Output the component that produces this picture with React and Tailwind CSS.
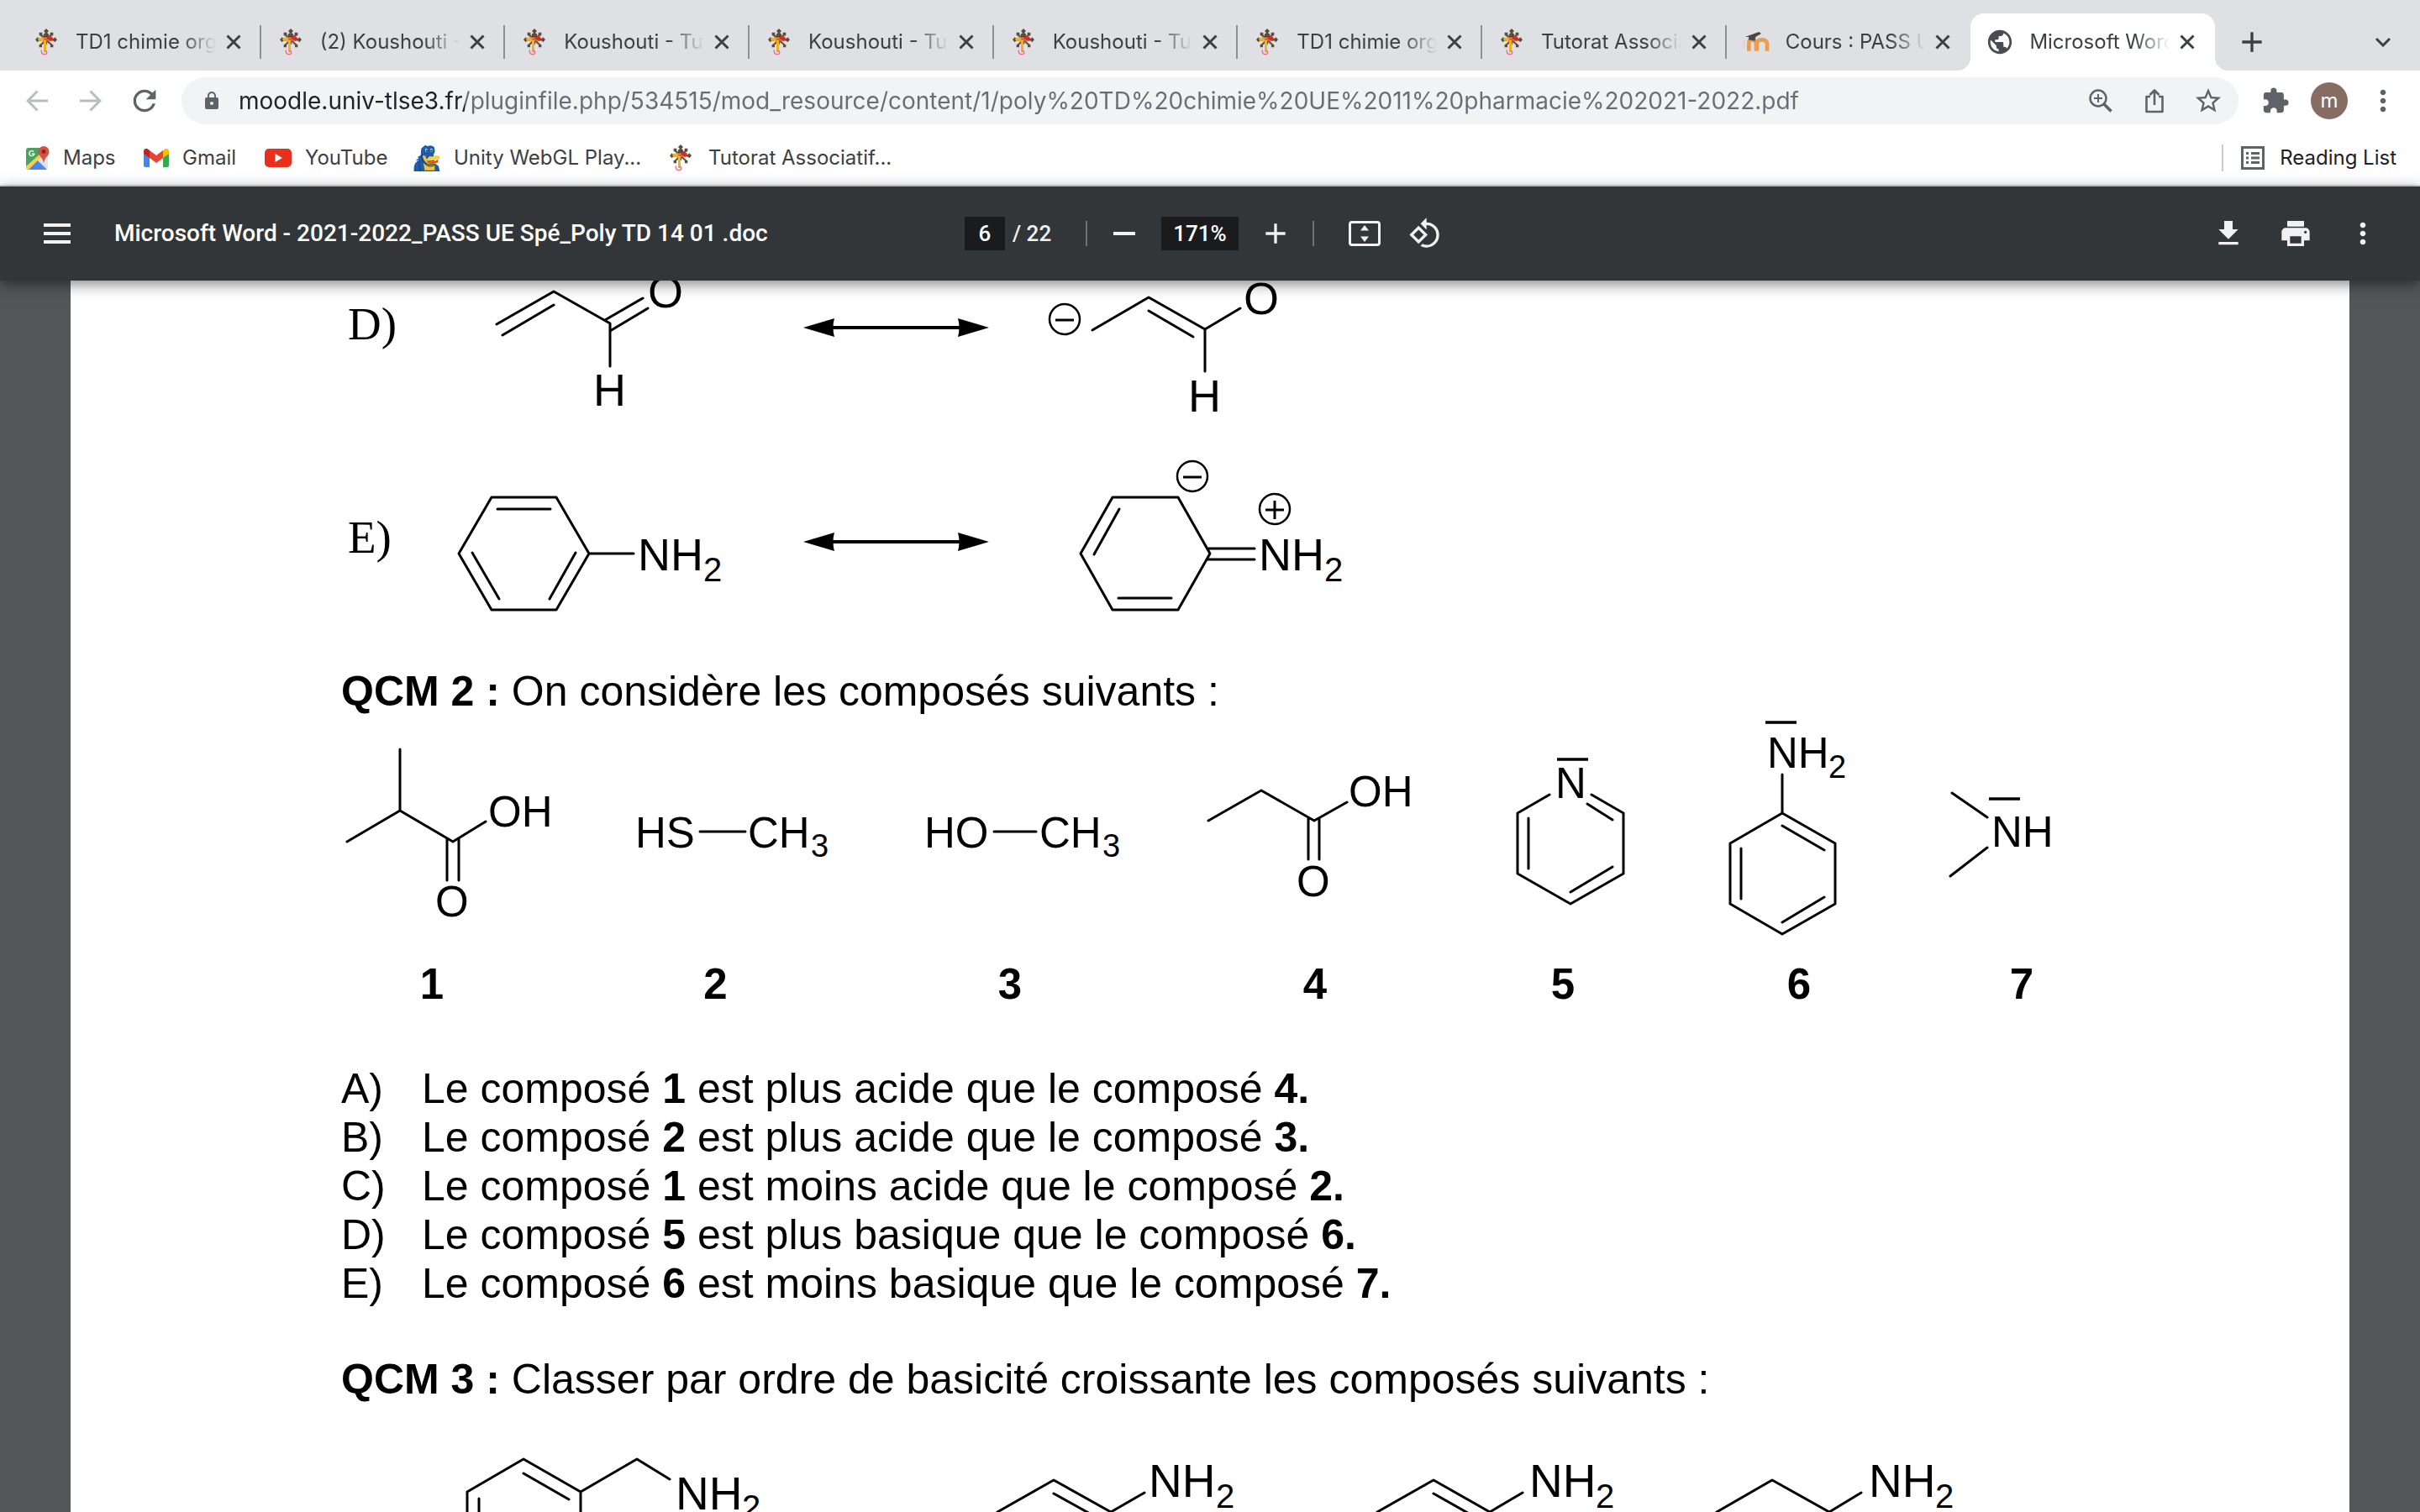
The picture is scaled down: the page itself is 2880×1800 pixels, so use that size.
import React from "react";
import {
  MdAdd,
  MdExtension,
  MdFileDownload,
  MdLock,
  MdMoreVert,
  MdPrint,
  MdPublic,
  MdRefresh,
  MdRotate90DegreesCcw,
  MdStarBorder,
} from "react-icons/md";

/* ---------- small icons ---------- */

function TutoratIcon() {
  return (
    <svg viewBox="0 0 78 96" className="h-8 w-[26px] shrink-0" aria-hidden="true">
      <g stroke="#6b5645" strokeWidth="7" fill="none">
        <path d="M39 6V56M6 40H72M17 20L60 60M61 20L18 60" />
      </g>
      <g fill="#5c4a3c">
        <path d="M39 0l9 9-9 9-9-9zM0 40l8-9 8 9-8 9zM78 40l-8-9-8 9 8 9zM14 14h11v11H14zM53 14h11v11H53zM14 57h10v10H14zM54 57h10v10H54z" />
        <circle cx="39" cy="26" r="10" />
      </g>
      <path d="M10 36q4-5 10-4h30v11H39v34q0 9-8 8l-1-8V44H16q-7 0-6-8z" fill="#f3b21c" />
      <path d="M44 30h16l4 7-9 8-8-5H32l-4-4h12z" fill="#e02a1d" />
      <path d="M22 76q-2 14 9 16q12 1 10-9q-3-6-9-2" fill="none" stroke="#e8707c" strokeWidth="4" />
    </svg>
  );
}

function MoodleIcon() {
  return (
    <svg viewBox="0 0 96 72" className="h-6 w-8 shrink-0" aria-hidden="true">
      <path d="M22 68V40q0-11 12-11t14 11V68M50 68V40q3-13 19-12t18 13V68" fill="none" stroke="#ee9d50" strokeWidth="14" />
      <path d="M0 34l8-8v30H2z" fill="#f3cdb8" />
      <path d="M8 18L58 0l8 6-20 12-2 14-24-4 2-10z" fill="#4a4644" />
    </svg>
  );
}

function MapsIcon() {
  return (
    <svg viewBox="0 0 28 28" className="size-7 shrink-0" aria-hidden="true">
      <clipPath id="maps-clip">
        <rect x="0" y="2" width="26" height="26" rx="3" />
      </clipPath>
      <g clipPath="url(#maps-clip)">
        <rect y="2" width="28" height="26" fill="#e3e5e8" />
        <path d="M0 2h20v8L0 27z" fill="#4aa260" />
        <path d="M0 24L18 8l3 6L5 28H0z" fill="#f7cf48" />
        <path d="M3 28l11-11 11 11z" fill="#5086ec" />
        <path d="M14 17l5-5 7 16z" fill="#dfe1e5" />
      </g>
      <path d="M21 0a6.500 6.500 0 0 0-6.500 6.700C14.500 11.500 20 13 21 20c1-7 6.500-8.500 6.500-13.300A6.500 6.500 0 0 0 21 0z" fill="#d95040" />
      <circle cx="21" cy="6.500" r="2.400" fill="#7c2820" />
      <path d="M9 6.500a3 3 0 1 0 .8 2.700H6.800" fill="none" stroke="#fff" strokeWidth="1.400" />
    </svg>
  );
}

function GmailIcon() {
  return (
    <svg viewBox="0 0 30 22" className="h-[22px] w-[30px] shrink-0" aria-hidden="true">
      <path d="M0 5l7 5v12H2a2 2 0 0 1-2-2z" fill="#4285f4" />
      <path d="M30 5l-7 5v12h5a2 2 0 0 0 2-2z" fill="#34a853" />
      <path d="M7 2l8 6 8-6v9l-8 6-8-6z" fill="#ea4335" />
      <path d="M0 3a3 3 0 0 1 5-2.400L7 2v9L0 6z" fill="#c5221f" />
      <path d="M30 3a3 3 0 0 0-5-2.400L23 2v9l7-5z" fill="#fbbc04" />
    </svg>
  );
}

function YouTubeIcon() {
  return (
    <svg viewBox="0 0 32 22" className="h-[22px] w-8 shrink-0" aria-hidden="true">
      <rect width="32" height="22" rx="5" fill="#e8301f" />
      <path d="M12.500 6v10l8.500-5z" fill="#fff" />
    </svg>
  );
}

function UnityIcon() {
  return (
    <svg viewBox="0 0 96 96" className="size-8 shrink-0" aria-hidden="true">
      <path d="M28 14L42 2l8 4q14-6 24 3l3 14-5 14 4 30 14 10 4 19H2q-2-24 8-32l10-8-12 2 12-10-6-2 12-8z" fill="#1e5cab" />
      <path d="M36 66q14 12 40 6v20H40z" fill="#f6c431" />
      <path d="M32 40q4 22 22 30l30-2 6-8-30 0q-14-4-18-20z" fill="#f6c431" />
      <path d="M58 42q8 4 24-4 14 2 12 12-8 8-24 6-12 4-22-2 4-8 10-12z" fill="#fbd24a" />
      <path d="M46 56q20 12 42-2l0 8q-18 10-36 4z" fill="#d8452c" />
      <path d="M32 34q-4 22 10 36t34 4" fill="none" stroke="#173a74" strokeWidth="3" />
      <ellipse cx="46" cy="20" rx="4" ry="6" fill="#dfeaf6" />
      <ellipse cx="64" cy="20" rx="4" ry="6" fill="#dfeaf6" />
      <circle cx="47" cy="22" r="3" fill="#14284a" />
      <circle cx="64" cy="22" r="3" fill="#14284a" />
      <path d="M20 70l6 26M12 60l12 6" stroke="#173a74" strokeWidth="3" fill="none" />
    </svg>
  );
}

function ReadingListIcon() {
  return (
    <svg viewBox="0 0 28 28" className="size-7 shrink-0" aria-hidden="true">
      <rect x="1.500" y="1.500" width="25" height="25" fill="none" stroke="#5f6368" strokeWidth="3" />
      <path d="M6 8.500h3M12 8.500h10M6 14h3M12 14h10M6 19.500h3M12 19.500h10" stroke="#5f6368" strokeWidth="3" />
    </svg>
  );
}

/* ---------- browser chrome ---------- */

const tabs = [
  { title: "TD1 chimie organique", icon: <TutoratIcon /> },
  { title: "(2) Koushouti - Tutorat", icon: <TutoratIcon /> },
  { title: "Koushouti - Tutorat", icon: <TutoratIcon /> },
  { title: "Koushouti - Tutorat", icon: <TutoratIcon /> },
  { title: "Koushouti - Tutorat", icon: <TutoratIcon /> },
  { title: "TD1 chimie organique", icon: <TutoratIcon /> },
  { title: "Tutorat Associatif", icon: <TutoratIcon /> },
  { title: "Cours : PASS UE", icon: <MoodleIcon /> },
  { title: "Microsoft Word - 2021", icon: <MdPublic className="size-[34px] shrink-0 text-[#4b4c52]" />, active: true },
];

function Tab({ title, icon, active, last }) {
  return (
    <div className={active ? "relative flex min-w-0 flex-1 items-center rounded-t-2xl bg-white" : "relative flex min-w-0 flex-1 items-center"}>
      {active && (
        <>
          <span className="absolute -left-4 bottom-0 size-4 bg-[radial-gradient(circle_at_0_0,#dee0e4_16px,#fff_16px)]" />
          <span className="absolute -right-4 bottom-0 size-4 bg-[radial-gradient(circle_at_100%_0,#dee0e4_16px,#fff_16px)]" />
        </>
      )}
      <span className="flex w-[70px] shrink-0 items-center justify-center">{icon}</span>
      <span className="min-w-0 flex-1 overflow-hidden whitespace-nowrap [mask-image:linear-gradient(to_right,black_75%,transparent)]">{title}</span>
      <button type="button" aria-label={`Close ${title}`} className="flex w-[52px] shrink-0 justify-start pl-3 text-[#3c4043]">
        <svg viewBox="0 0 18 18" className="size-[18px]">
          <path d="M1.500 1.500l15 15M16.500 1.500l-15 15" stroke="currentColor" strokeWidth="3" />
        </svg>
      </button>
      <span className={last ? "w-[2px]" : "h-10 w-[2px] bg-[#8c8f93]"} />
    </div>
  );
}

function TabStrip() {
  return (
    <div className="flex h-[84px] items-stretch bg-[#dee0e4] pt-4 pl-5 text-2xl text-[#3c4043]">
      <div className="flex min-w-0 flex-1">
        {tabs.map((t, i) => (
          <Tab key={i} {...t} last={i >= 7} />
        ))}
      </div>
      <div className="flex w-[244px] items-center justify-between pr-6 pl-6">
        <button type="button" aria-label="New tab">
          <MdAdd className="size-10" />
        </button>
        <button type="button" aria-label="Search tabs" className="flex w-10 justify-center">
          <svg viewBox="0 0 20 12" className="h-3 w-5">
            <path d="M2 2l8 8 8-8" fill="none" stroke="currentColor" strokeWidth="3" />
          </svg>
        </button>
      </div>
    </div>
  );
}

function AddressBar() {
  return (
    <div className="flex h-[72px] items-center bg-white text-[#5f6368]">
      <div className="flex w-[216px] items-center gap-6 pl-6">
        <button type="button" aria-label="Back" className="flex w-10 justify-center text-[#babcbe]">
          <svg viewBox="0 0 26 26" className="size-[26px]">
            <path d="M26 13H2M13.500 1.500L2 13l11.500 11.500" fill="none" stroke="currentColor" strokeWidth="3" />
          </svg>
        </button>
        <button type="button" aria-label="Forward" className="flex w-10 justify-center text-[#babcbe]">
          <svg viewBox="0 0 26 26" className="size-[26px]">
            <path d="M0 13h24M12.500 1.500L24 13 12.500 24.500" fill="none" stroke="currentColor" strokeWidth="3" />
          </svg>
        </button>
        <button type="button" aria-label="Reload">
          <MdRefresh className="size-10" />
        </button>
      </div>
      <div className="flex h-14 min-w-0 flex-1 items-center rounded-full bg-[#f1f3f5] pr-4 pl-6">
        <MdLock className="size-6 shrink-0" />
        <input
          type="text"
          aria-label="Address"
          readOnly
          value="moodle.univ-tlse3.fr/pluginfile.php/534515/mod_resource/content/1/poly%20TD%20chimie%20UE%2011%20pharmacie%202021-2022.pdf"
          className="ml-5 h-12 min-w-0 flex-1 bg-[linear-gradient(to_right,#202124_269px,#696d72_269px)] bg-clip-text text-[28px] text-transparent outline-none"
        />
        <div className="flex items-center gap-6">
          <button type="button" aria-label="Zoom" className="flex w-10 justify-center">
            <svg viewBox="0 0 28 28" className="size-7">
              <circle cx="11" cy="11" r="9.500" fill="none" stroke="currentColor" strokeWidth="2.500" />
              <path d="M18 18l8.500 8.500" stroke="currentColor" strokeWidth="3.500" />
              <path d="M11 6v10M6 11h10" stroke="currentColor" strokeWidth="2" />
            </svg>
          </button>
          <button type="button" aria-label="Share" className="flex w-10 justify-center">
            <svg viewBox="0 0 24 30" className="h-[30px] w-6">
              <path d="M7 10H2.500v18h19V10H17M12 20V3M6.500 8L12 2.500 17.500 8" fill="none" stroke="currentColor" strokeWidth="2.600" strokeLinejoin="round" />
            </svg>
          </button>
          <button type="button" aria-label="Bookmark" className="flex w-10 justify-center">
            <MdStarBorder className="size-9" />
          </button>
        </div>
      </div>
      <div className="flex w-[216px] items-center gap-[22px] pl-6">
        <button type="button" aria-label="Extensions" className="flex w-10 justify-center">
          <MdExtension className="size-[34px]" />
        </button>
        <button type="button" aria-label="Profile" className="flex size-11 items-center justify-center rounded-full bg-[#866c63] text-2xl text-white">
          m
        </button>
        <button type="button" aria-label="Menu">
          <MdMoreVert className="size-10" />
        </button>
      </div>
    </div>
  );
}

function Bookmark({ icon, children, className }) {
  return (
    <a href="#" className={className}>
      {icon}
      <span className="whitespace-nowrap">{children}</span>
    </a>
  );
}

function BookmarksBar() {
  return (
    <nav className="flex h-[66px] items-center border-b-2 border-[#d5d7da] bg-white pr-7 pl-[31px] text-2xl text-[#3c4043]">
      <Bookmark className="flex w-[140px] items-center gap-4" icon={<MapsIcon />}>Maps</Bookmark>
      <Bookmark className="flex w-36 items-center gap-4" icon={<GmailIcon />}>Gmail</Bookmark>
      <Bookmark className="flex w-[177px] items-center gap-4" icon={<YouTubeIcon />}>YouTube</Bookmark>
      <Bookmark className="flex w-[305px] items-center gap-4" icon={<UnityIcon />}>Unity WebGL Play...</Bookmark>
      <Bookmark className="flex items-center gap-5" icon={<TutoratIcon />}>Tutorat Associatif...</Bookmark>
      <button type="button" className="ml-auto flex h-8 items-center gap-[18px] border-l-2 border-[#c9cbce] pl-[21px] text-[#202124]">
        <ReadingListIcon />
        Reading List
      </button>
    </nav>
  );
}

/* ---------- PDF toolbar ---------- */

function PdfToolbar() {
  return (
    <header className="relative z-10 flex h-28 items-center bg-[#323639] font-[Roboto,sans-serif] text-[28px] font-medium text-[#f1f1f1] shadow-[0_4px_16px_rgba(0,0,0,0.5)]">
      <div className="flex min-w-0 flex-1 items-center gap-12 pl-12">
        <button type="button" aria-label="Menu" className="flex w-10 justify-center">
          <svg viewBox="0 0 32 24" className="h-6 w-8">
            <path d="M0 2h32M0 12h32M0 22h32" stroke="currentColor" strokeWidth="4" />
          </svg>
        </button>
        <h1 className="whitespace-nowrap text-white">Microsoft Word - 2021-2022_PASS UE Spé_Poly TD 14 01 .doc</h1>
      </div>
      <div className="flex items-center pr-4">
        <input type="text" aria-label="Page" defaultValue="6" className="h-10 w-12 bg-[#191b1c] text-center text-[26px] text-white" />
        <span className="w-24 pl-[9px] text-[26px]">/ 22</span>
        <span className="mr-6 h-[30px] w-[2px] bg-[#707376]" />
        <button type="button" aria-label="Zoom out" className="flex size-10 items-center justify-center">
          <svg viewBox="0 0 26 4" className="h-1 w-[26px]">
            <path d="M0 2h26" stroke="currentColor" strokeWidth="4" />
          </svg>
        </button>
        <input type="text" aria-label="Zoom level" defaultValue="171%" className="mx-6 h-10 w-[92px] bg-[#191b1c] text-center text-[26px] text-white" />
        <button type="button" aria-label="Zoom in">
          <MdAdd className="size-10" />
        </button>
        <span className="mx-6 h-[30px] w-[2px] bg-[#707376]" />
        <button type="button" aria-label="Fit to page" className="mr-8 ml-4 flex size-10 items-center justify-center">
          <svg viewBox="0 0 38 30" className="h-[30px] w-[38px]">
            <rect x="1.500" y="1.500" width="35" height="27" rx="2.500" fill="none" stroke="currentColor" strokeWidth="3" />
            <path d="M19 5l5 6.500H14zM19 25l5-6.500H14z" fill="currentColor" />
          </svg>
        </button>
        <button type="button" aria-label="Rotate">
          <MdRotate90DegreesCcw className="size-10" />
        </button>
      </div>
      <div className="flex flex-1 items-center justify-end gap-10 pr-12">
        <button type="button" aria-label="Download">
          <MdFileDownload className="size-10" />
        </button>
        <button type="button" aria-label="Print">
          <MdPrint className="size-10" />
        </button>
        <button type="button" aria-label="More">
          <MdMoreVert className="size-10" />
        </button>
      </div>
    </header>
  );
}

/* ---------- document drawings ---------- */

/* A drawing cut from the sheet's coordinate space: x, y is its corner. */
function Drawing({ x, y, w, h, d, size = 51, labels = [], children }) {
  return (
    <svg viewBox={`${x} ${y} ${w} ${h}`} width={w} height={h} className="block shrink-0" role="img" aria-label="Molecule">
      <path d={d} fill="none" stroke="#000" strokeWidth="3" strokeLinecap="round" strokeLinejoin="round" />
      {children}
      <g fill="#000" fontFamily="'Liberation Sans', Arial, sans-serif">
        {labels.map(([lx, ly, text, small]) => (
          <text key={`${lx}-${ly}`} x={lx} y={ly} fontSize={small || size}>
            {text}
          </text>
        ))}
      </g>
    </svg>
  );
}

function Charge({ x, y, plus }) {
  return (
    <g fill="none" stroke="#000">
      <circle cx={x} cy={y} r="18" strokeWidth="2.500" />
      <path d={`M${x - 11} ${y + 1}h22`} strokeWidth="3" />
      {plus && <path d={`M${x} ${y - 10}v22`} strokeWidth="3" />}
    </g>
  );
}

function ResonanceArrow({ y, top, h }) {
  return (
    <svg viewBox={`880 ${top} 360 ${h}`} width="360" height={h} className="block shrink-0" role="img" aria-label="Resonance arrow">
      <path d={`M980 ${y}H1154`} stroke="#000" strokeWidth="4" />
      <path d={`M956 ${y}l37-11q-3 11 0 22zM1177 ${y}l-37-11q3 11 0 22z`} />
    </svg>
  );
}

const compounds = [
  {
    n: 1, x: 352, w: 324,
    d: "M476 892V965L413 1002M476 965L539 1002L578 978M532 998V1048M546 998V1048",
    labels: [[581, 984, "OH"], [518, 1091, "O"]],
  },
  { n: 2, x: 676, w: 351, d: "M833 990H887", labels: [[756, 1009, "HS"], [890, 1009, "CH"], [965, 1020, "3", 38]] },
  { n: 3, x: 1027, w: 350, d: "M1183 990H1233", labels: [[1100, 1009, "HO"], [1237, 1009, "CH"], [1312, 1020, "3", 38]] },
  {
    n: 4, x: 1377, w: 376,
    d: "M1438 977L1501 941L1564 977L1603 955M1557 974V1023M1570 974V1023",
    labels: [[1605, 960, "OH"], [1543, 1067, "O"]],
  },
  {
    n: 5, x: 1753, w: 214, bar: [1853, 904],
    d: "M1844 946L1806 968V1040L1869 1076L1932 1040V968L1894 946M1819 974V1034M1889 957L1919 976M1919 1032L1869 1062",
    labels: [[1851, 950, "N"]],
  },
  {
    n: 6, x: 1967, w: 348, bar: [2101, 860],
    d: "M2121 922V968L2184 1004V1076L2121 1112L2059 1076V1004L2121 968M2121 983L2171 1012M2072 1010V1070M2171 1068L2121 1098",
    labels: [[2103, 914, "NH"], [2176, 926, "2", 38]],
  },
  {
    n: 7, x: 2315, w: 182, bar: [2367, 951],
    d: "M2323 944L2365 973M2321 1043L2365 1009",
    labels: [[2370, 1008, "NH"]],
  },
];

const answers = [
  ["A)", "1", "plus acide", "4."],
  ["B)", "2", "plus acide", "3."],
  ["C)", "1", "moins acide", "2."],
  ["D)", "5", "plus basique", "6."],
  ["E)", "6", "moins basique", "7."],
];

function Sheet() {
  return (
    <article className="min-w-0 flex-1 bg-white pl-[268px] font-['Liberation_Sans',Arial,sans-serif] text-[50px] leading-[58px] text-black">
      <section className="flex">
        <span className="mt-[22px] w-[188px] pl-[62px] font-['Liberation_Serif',serif] text-[55px] leading-[60px]">D)</span>
        <Drawing
          x={540} y={334} w={340} h={166} size={54}
          d="M591 386L659 347L726 385V436M598 399L659 363M720 381L765 355M726 394L771 367"
          labels={[[706, 483, "H"], [771, 366, "O"]]}
        />
        <ResonanceArrow y={390} top={334} h={166} />
        <Drawing
          x={1240} y={334} w={380} h={166} size={54}
          d="M1300 393L1367 354L1434 392L1476 367M1367 370L1420 401M1434 392V442"
          labels={[[1414, 490, "H"], [1480, 374, "O"]]}
        >
          <Charge x={1267} y={380} />
        </Drawing>
      </section>

      <section className="mt-10 flex items-center">
        <span className="w-[188px] pl-[62px] font-['Liberation_Serif',serif] text-[55px] leading-[60px]">E)</span>
        <Drawing
          x={540} y={540} w={340} h={200} size={54}
          d="M585 592H662L701 659L662 726H585L546 659ZM592 606H655M562 658L594 713M685 658L654 713M701 659H754"
          labels={[[759, 679, "NH"], [837, 692, "2", 40]]}
        />
        <ResonanceArrow y={645} top={540} h={200} />
        <Drawing
          x={1240} y={540} w={380} h={200} size={54}
          d="M1324 592H1402L1440 659L1402 726H1324L1286 659ZM1332 606L1302 660M1331 712H1394M1437 653H1493M1437 666H1493"
          labels={[[1498, 679, "NH"], [1576, 692, "2", 40]]}
        >
          <Charge x={1419} y={567} />
          <Charge x={1517} y={606} plus />
        </Drawing>
      </section>

      <h2 className="mt-[54px] pl-[54px]">
        <b>QCM 2 :</b> On considère les composés suivants :
      </h2>
      <div className="flex">
        {compounds.map((c) => (
          <figure key={c.n} className="flex flex-col items-center gap-6">
            <Drawing x={c.x} y={852} w={c.w} h={267} d={c.d} labels={c.labels}>
              {c.bar && <path d={`M${c.bar[0]} ${c.bar[1]}h37`} stroke="#000" strokeWidth="3.500" />}
            </Drawing>
            <figcaption className="text-[51px] font-bold">{c.n}</figcaption>
          </figure>
        ))}
      </div>

      <ol className="mt-[66px] pl-[54px]">
        {answers.map(([letter, a, relation, b]) => (
          <li key={letter} className="flex">
            <span className="w-24">{letter}</span>
            <span>
              Le composé <b>{a}</b> est {relation} que le composé <b>{b}</b>
            </span>
          </li>
        ))}
      </ol>

      <h2 className="mt-14 pl-[54px]">
        <b>QCM 3 :</b> Classer par ordre de basicité croissante les composés suivants :
      </h2>
      <div className="flex pl-[188px]">
        <Drawing
          x={540} y={1671} w={560} h={240} size={55}
          d="M556 1776L623 1737L691 1776V1854L623 1893L556 1854ZM691 1776L758 1737L797 1761M623 1754L677 1785M570 1784V1846M677 1846L623 1877"
          labels={[[804, 1797, "NH"], [883, 1808, "2", 40]]}
        />
        <Drawing
          x={1100} y={1671} w={500} h={240} size={55}
          d="M1187 1800L1254 1762L1322 1800L1362 1777M1254 1778L1308 1808M1187 1800V1878L1254 1900L1322 1878V1800"
          labels={[[1367, 1782, "NH"], [1447, 1795, "2", 40]]}
        />
        <Drawing
          x={1600} y={1671} w={400} h={240} size={55}
          d="M1639 1800L1706 1762L1773 1800L1812 1777M1706 1778L1759 1808M1639 1800V1878L1706 1900L1773 1878V1800"
          labels={[[1820, 1782, "NH"], [1899, 1795, "2", 40]]}
        />
        <Drawing
          x={2000} y={1671} w={400} h={240} size={55}
          d="M2043 1800L2109 1762L2177 1800L2215 1777M2043 1800V1878L2109 1900L2177 1878V1800"
          labels={[[2224, 1782, "NH"], [2303, 1795, "2", 40]]}
        />
      </div>
    </article>
  );
}

export default function App() {
  return (
    <div className="flex h-screen flex-col overflow-hidden font-[Inter,sans-serif]">
      <TabStrip />
      <AddressBar />
      <BookmarksBar />
      <PdfToolbar />
      <main className="flex min-h-0 flex-1 items-start overflow-hidden bg-[#525659] px-[84px]">
        <Sheet />
      </main>
    </div>
  );
}
